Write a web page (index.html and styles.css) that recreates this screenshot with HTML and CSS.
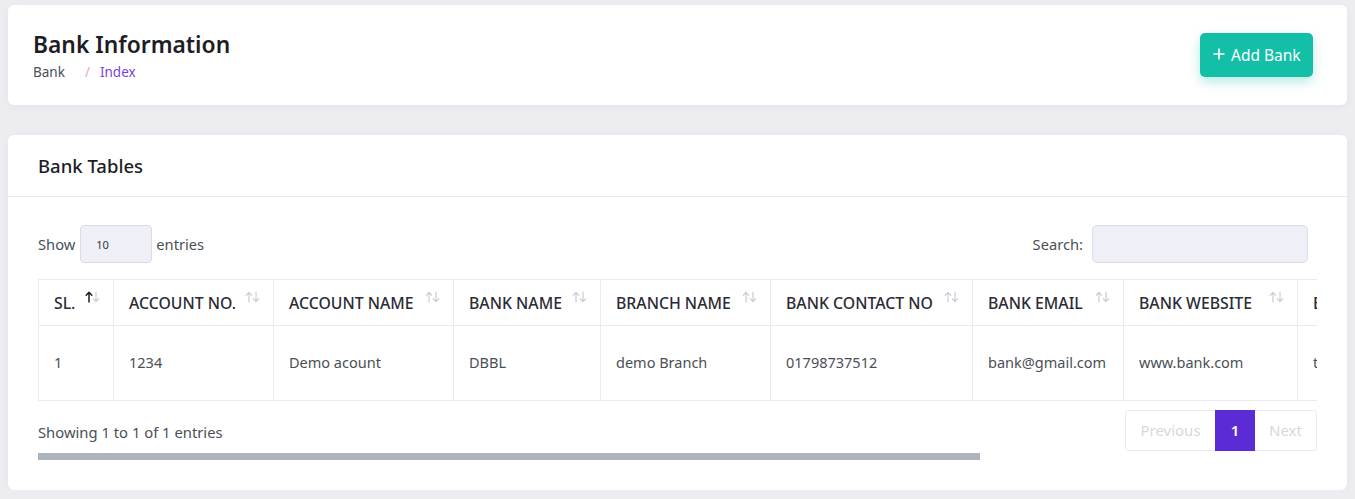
FILE: index.html
```html
<!DOCTYPE html>
<html lang="en">
<head>
<meta charset="utf-8">
<title>Bank Information</title>
<link rel="stylesheet" href="styles.css">
</head>
<body>
<main class="page">
  <section class="card page-head">
    <div class="head-text">
      <h1 class="page-title">Bank Information</h1>
      <nav class="crumbs">
        <span class="crumb">Bank</span>
        <span class="crumb-sep">/</span>
        <span class="crumb crumb-active">Index</span>
      </nav>
    </div>
    <button class="btn-add"><svg class="btn-plus" width="12" height="12" viewBox="0 0 12 12"><path d="M6 0.5v11M0.5 6h11"/></svg><span>Add Bank</span></button>
  </section>

  <section class="card table-card">
    <header class="card-header">
      <h2 class="card-title">Bank Tables</h2>
    </header>
    <div class="card-body">
      <div class="dt-top">
        <label class="dt-length">Show <span class="length-box">10</span> entries</label>
        <label class="dt-search">Search: <span class="search-box"></span></label>
      </div>
      <div class="table-clip">
        <table class="bank-table">
          <thead>
            <tr>
              <th class="c-sl">SL.<span class="sort asc"><svg width="16" height="12" viewBox="0 0 16 12"><path class="up" d="M4 11V1.5M1.2 4.3L4 1.3l2.8 3"/><path class="down" d="M11 1v9.5M8.2 7.7L11 10.7l2.8-3"/></svg></span></th>
              <th class="c-acno">ACCOUNT NO.<span class="sort"><svg width="16" height="12" viewBox="0 0 16 12"><path class="up" d="M4 11V1.5M1.2 4.3L4 1.3l2.8 3"/><path class="down" d="M11 1v9.5M8.2 7.7L11 10.7l2.8-3"/></svg></span></th>
              <th class="c-acname">ACCOUNT NAME<span class="sort"><svg width="16" height="12" viewBox="0 0 16 12"><path class="up" d="M4 11V1.5M1.2 4.3L4 1.3l2.8 3"/><path class="down" d="M11 1v9.5M8.2 7.7L11 10.7l2.8-3"/></svg></span></th>
              <th class="c-bank">BANK NAME<span class="sort"><svg width="16" height="12" viewBox="0 0 16 12"><path class="up" d="M4 11V1.5M1.2 4.3L4 1.3l2.8 3"/><path class="down" d="M11 1v9.5M8.2 7.7L11 10.7l2.8-3"/></svg></span></th>
              <th class="c-branch">BRANCH NAME<span class="sort"><svg width="16" height="12" viewBox="0 0 16 12"><path class="up" d="M4 11V1.5M1.2 4.3L4 1.3l2.8 3"/><path class="down" d="M11 1v9.5M8.2 7.7L11 10.7l2.8-3"/></svg></span></th>
              <th class="c-contact">BANK CONTACT NO<span class="sort"><svg width="16" height="12" viewBox="0 0 16 12"><path class="up" d="M4 11V1.5M1.2 4.3L4 1.3l2.8 3"/><path class="down" d="M11 1v9.5M8.2 7.7L11 10.7l2.8-3"/></svg></span></th>
              <th class="c-email">BANK EMAIL<span class="sort"><svg width="16" height="12" viewBox="0 0 16 12"><path class="up" d="M4 11V1.5M1.2 4.3L4 1.3l2.8 3"/><path class="down" d="M11 1v9.5M8.2 7.7L11 10.7l2.8-3"/></svg></span></th>
              <th class="c-web">BANK WEBSITE<span class="sort"><svg width="16" height="12" viewBox="0 0 16 12"><path class="up" d="M4 11V1.5M1.2 4.3L4 1.3l2.8 3"/><path class="down" d="M11 1v9.5M8.2 7.7L11 10.7l2.8-3"/></svg></span></th>
              <th class="c-addr">BANK ADDRESS<span class="sort"><svg width="16" height="12" viewBox="0 0 16 12"><path class="up" d="M4 11V1.5M1.2 4.3L4 1.3l2.8 3"/><path class="down" d="M11 1v9.5M8.2 7.7L11 10.7l2.8-3"/></svg></span></th>
              <th class="c-act">ACTION</th>
            </tr>
          </thead>
          <tbody>
            <tr>
              <td>1</td>
              <td>1234</td>
              <td>Demo acount</td>
              <td>DBBL</td>
              <td>demo Branch</td>
              <td>01798737512</td>
              <td>bank@gmail.com</td>
              <td>www.bank.com</td>
              <td>test address</td>
              <td></td>
            </tr>
          </tbody>
        </table>
      </div>
      <div class="dt-bottom">
        <div class="dt-info">Showing 1 to 1 of 1 entries</div>
        <div class="pager">
          <span class="pg pg-off">Previous</span>
          <span class="pg pg-on">1</span>
          <span class="pg pg-off">Next</span>
        </div>
      </div>
      <div class="hscroll"><div class="hscroll-thumb"></div></div>
    </div>
  </section>
</main>
</body>
</html>
```

FILE: styles.css
```css
* { box-sizing: border-box; }
html, body { margin: 0; padding: 0; }
body {
  background: #ececf1;
  font-family: "Noto Sans", "Open Sans", sans-serif;
  color: #555;
  font-size: 15px;
}
.page {
  padding: 5px 8px 0 8px;
  display: flex;
  flex-direction: column;
  gap: 30px;
}
.card {
  background: #fff;
  border-radius: 6px;
  box-shadow: 0 2px 10px rgba(20, 20, 60, 0.04);
}
.page-head {
  height: 100px;
  display: flex;
  align-items: center;
  justify-content: space-between;
  padding: 0 34px 0 25px;
}
.head-text { margin-top: 0; }
.page-title {
  margin: 0;
  font-size: 22.8px;
  font-weight: 600;
  color: #1d1d26;
  line-height: 30px;
}
.crumbs {
  font-size: 13.5px;
  line-height: 18px;
  margin-top: 3px;
  display: flex;
}
.crumb { color: #495057; }
.crumb-sep { color: #f2a6b0; margin: 0 10px 0 20px; }
.crumb-active { color: #7a3fe4; }
.btn-add {
  height: 44px;
  width: 113px;
  padding: 0 0 0 13px;
  background: #13bfa6;
  border: 0;
  border-radius: 5px;
  color: #fff;
  font-family: inherit;
  font-size: 15.5px;
  box-shadow: 0 5px 12px rgba(19, 191, 166, 0.3);
  display: flex;
  align-items: center;
  gap: 6px;
}
.btn-plus path {
  fill: none;
  stroke: #fff;
  stroke-width: 1.6;
}
.btn-plus { margin-top: -3px; }

.table-card { height: 355px; }
.card-header {
  height: 62px;
  border-bottom: 1px solid #e9ebf2;
  display: flex;
  align-items: center;
  padding: 0 30px;
}
.card-title {
  margin: 0;
  font-size: 18.5px;
  font-weight: 500;
  color: #1d1d26;
}
.card-body { padding: 28px 30px 0 30px; }
.dt-top {
  display: flex;
  justify-content: space-between;
  align-items: center;
  height: 38px;
  padding-right: 9px;
}
.dt-length, .dt-search {
  display: flex;
  align-items: center;
  gap: 4px;
  color: #495057;
  font-size: 14.7px;
}
.length-box {
  width: 72px;
  height: 38px;
  background: #efeff8;
  border: 1px solid #d9dbe6;
  border-radius: 4px;
  font-size: 11px;
  color: #333;
  display: flex;
  align-items: center;
  padding-left: 15px;
  margin-left: 1px;
}
.dt-search { gap: 9px; }
.search-box {
  width: 216px;
  height: 38px;
  background: #efeff8;
  border: 1px solid #d9dbe6;
  border-radius: 5px;
}
.table-clip {
  margin-top: 16px;
  overflow: hidden;
  width: 1279px;
}
.bank-table {
  border-collapse: collapse;
  table-layout: fixed;
  width: 1740px;
}
.bank-table th, .bank-table td {
  border: 1px solid #e9ebf2;
  text-align: left;
  white-space: nowrap;
}
.bank-table th {
  position: relative;
  height: 46px;
  padding: 0 28px 0 15px;
  font-size: 15.8px;
  font-weight: 500;
  color: #2b2b35;
}
.bank-table td {
  height: 75px;
  padding: 0 15px 2px 15px;
  font-size: 14.5px;
  color: #4a4f56;
}
.c-sl { width: 75px; }
.c-acno { width: 160px; }
.c-acname { width: 180px; }
.c-bank { width: 147px; }
.c-branch { width: 170px; }
.c-contact { width: 202px; }
.c-email { width: 151px; }
.c-web { width: 174px; }
.c-addr { width: 170px; }
.c-act { width: 311px; }
.sort {
  position: absolute;
  right: 12px;
  top: 11px;
  line-height: 0;
}
.sort path {
  fill: none;
  stroke: #c9ccd4;
  stroke-width: 1.2;
  stroke-linecap: round;
  stroke-linejoin: round;
}
.sort.asc .up { stroke: #1f1f28; stroke-width: 1.5; }

.dt-bottom {
  display: flex;
  justify-content: space-between;
  align-items: center;
  margin-top: 9px;
  width: 1279px;
}
.dt-info { color: #495057; font-size: 14.8px; padding-top: 2px; }
.pager {
  display: flex;
  border: 1px solid #e9ebf2;
  border-radius: 3px;
  height: 41px;
}
.pg {
  display: flex;
  align-items: center;
  justify-content: center;
  font-size: 15px;
  padding-bottom: 2px;
}
.pg-off { color: #d5d8df; }
.pg:first-child { width: 89px; }
.pg-on {
  width: 40px;
  background: #5b2cd6;
  color: #fff;
  font-weight: 600;
  margin: -1px 0;
}
.pg:last-child { width: 61px; }
.hscroll {
  width: 1279px;
  height: 7px;
  margin-top: 2px;
}
.hscroll-thumb {
  width: 942px;
  height: 7px;
  background: #adb4bc;
}
```
